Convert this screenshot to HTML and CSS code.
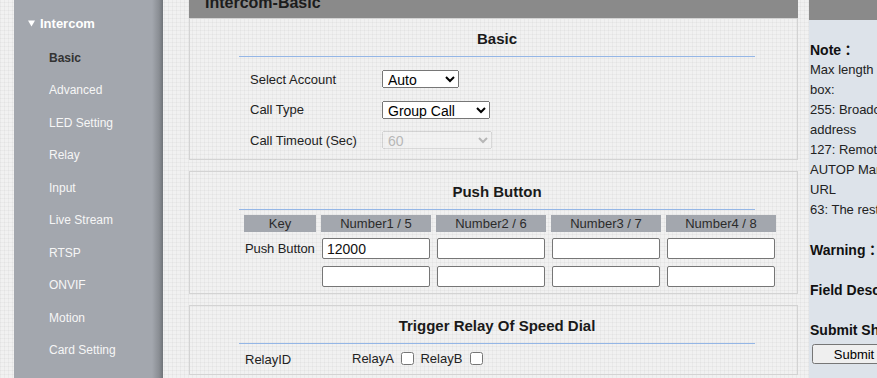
FILE: index.html
```html
<!DOCTYPE html>
<html lang="en">
<head>
<meta charset="utf-8">
<title>Intercom-Basic</title>
<link rel="stylesheet" href="styles.css">
</head>
<body>
<div class="page">
  <nav class="sidebar">
    <div class="group">
      <svg class="caret" width="8" height="7" viewBox="0 0 8 7"><polygon points="0,0 8,0 4,7" fill="#ffffff"/></svg>
      <span>Intercom</span>
    </div>
    <ul class="menu">
      <li class="active">Basic</li>
      <li>Advanced</li>
      <li>LED Setting</li>
      <li>Relay</li>
      <li>Input</li>
      <li>Live Stream</li>
      <li>RTSP</li>
      <li>ONVIF</li>
      <li>Motion</li>
      <li>Card Setting</li>
    </ul>
  </nav>

  <main class="main">
    <h1 class="page-title">Intercom-Basic</h1>

    <section class="box">
      <div class="box-head"><h2>Basic</h2></div>
      <div class="form">
        <label class="form-label">Select Account</label>
        <select class="sel sel-account"><option>Auto</option></select>
        <label class="form-label">Call Type</label>
        <select class="sel sel-type"><option>Group Call</option></select>
        <label class="form-label">Call Timeout (Sec)</label>
        <select class="sel sel-timeout" disabled><option>60</option></select>
      </div>
    </section>

    <section class="box">
      <div class="box-head"><h2>Push Button</h2></div>
      <table class="keys">
        <tr>
          <th class="col-key">Key</th>
          <th class="col-num">Number1 / 5</th>
          <th class="col-num">Number2 / 6</th>
          <th class="col-num">Number3 / 7</th>
          <th class="col-num">Number4 / 8</th>
        </tr>
        <tr>
          <td class="key-label">Push Button</td>
          <td><input class="txt" type="text" value="12000"></td>
          <td><input class="txt" type="text"></td>
          <td><input class="txt" type="text"></td>
          <td><input class="txt" type="text"></td>
        </tr>
        <tr>
          <td class="key-label"></td>
          <td><input class="txt" type="text"></td>
          <td><input class="txt" type="text"></td>
          <td><input class="txt" type="text"></td>
          <td><input class="txt" type="text"></td>
        </tr>
      </table>
    </section>

    <section class="box box-last">
      <div class="box-head"><h2>Trigger Relay Of Speed Dial</h2></div>
      <div class="relay-row">
        <span class="relay-label">RelayID</span>
        <span class="relay-opts">RelayA <input type="checkbox"> RelayB <input type="checkbox"></span>
      </div>
    </section>
  </main>

  <aside class="note">
    <div class="note-head"></div>
    <div class="note-body">
      <div class="note-block">
        <h3>Note：</h3>
        <p>Max length of the input<br>box:<br>255: Broadcast<br>address<br>127: Remote<br>AUTOP Manual<br>URL<br>63: The rest</p>
      </div>
      <div class="note-block"><h3>Warning：</h3></div>
      <div class="note-block"><h3>Field Description</h3></div>
      <div class="note-block">
        <h3>Submit Shortcut</h3>
        <button class="submit" type="button">Submit</button>
      </div>
    </div>
  </aside>
</div>
</body>
</html>
```

FILE: styles.css
```css
html, body {
  margin: 0;
  padding: 0;
  overflow: hidden;
}

body {
  font-family: "Liberation Sans", Arial, "Noto Sans CJK JP", sans-serif;
  color: #222;
  background-color: #f1f1f1;
  background-image:
    repeating-linear-gradient(0deg, rgba(0,0,0,0.03) 0 1px, transparent 1px 4px),
    repeating-linear-gradient(90deg, rgba(0,0,0,0.03) 0 1px, transparent 1px 4px);
}

.page {
  display: flex;
  align-items: flex-start;
  margin-top: -13px;
  padding-left: 14px;
  height: 420px;
}

/* Sidebar */
.sidebar {
  flex: none;
  width: 149px;
  height: 420px;
  background: linear-gradient(to right, #a3a7ae 0, #a3a7ae 138px, #8a8e94 145px, #6f7378 149px);
}

.group {
  display: flex;
  align-items: center;
  gap: 5px;
  height: 32px;
  margin-top: 20px;
  padding-left: 14px;
  color: #fff;
  font-weight: bold;
  font-size: 13px;
}

.caret {
  display: block;
  width: 7px;
  height: 7px;
}

.menu {
  list-style: none;
  margin: 2.75px 0 0;
  padding: 0 0 0 35px;
}

.menu li {
  height: 32.5px;
  line-height: 32.5px;
  font-size: 12px;
  color: #f6f6f6;
}

.menu li.active {
  color: #333;
  font-weight: bold;
}

/* Main */
.main {
  flex: none;
  width: 609px;
  margin-left: 26px;
}

.page-title {
  margin: 0;
  height: 31px;
  line-height: 31px;
  padding-left: 16px;
  background: #8a8a8a;
  color: #1c1c1c;
  font-size: 16px;
  font-weight: bold;
}

.box {
  border: 1px solid #d3d3d3;
  margin-bottom: 11px;
}

.box-head {
  width: 516px;
  margin-left: 49px;
  padding: 11px 0 8px;
  border-bottom: 1px solid #94b6e6;
}

.box-head h2 {
  margin: 0;
  font-size: 15px;
  line-height: 18px;
  font-weight: bold;
  text-align: center;
  color: #1a1a1a;
}

/* Basic form */
.form {
  display: grid;
  grid-template-columns: 132px auto;
  grid-auto-rows: 18px;
  row-gap: 12.5px;
  align-items: center;
  justify-items: start;
  padding: 13px 0 10px 60px;
}

.form-label {
  font-size: 13px;
  color: #222;
}

.sel {
  height: 18px;
  font-family: "Liberation Sans", Arial, sans-serif;
  font-size: 14px;
  padding: 0 0 0 1px;
  color: #000;
}

.sel:disabled {
  color: #a0a0a0;
}

.sel-account { width: 77px; }
.sel-type { width: 108px; }
.sel-timeout { width: 110px; }

/* Push button table */
.keys {
  border-collapse: separate;
  border-spacing: 5px;
  margin-left: 49px;
  table-layout: fixed;
}

.keys th {
  height: 17px;
  padding: 0;
  background: #a3a7ae;
  color: #2b2b2b;
  font-size: 13px;
  font-weight: normal;
  text-align: center;
  white-space: nowrap;
}

.col-key { width: 72px; }
.col-num { width: 110px; }

.keys td {
  padding: 1px;
  height: 21px;
}

.keys td.key-label {
  padding: 1px 0 1px 1px;
  font-size: 13px;
  color: #222;
  text-align: left;
  white-space: nowrap;
  letter-spacing: -0.1px;
}

.txt {
  display: block;
  box-sizing: border-box;
  width: 108px;
  height: 21px;
  margin: 0;
  padding: 0 4px;
  border: 1px solid #767676;
  border-radius: 2px;
  background: #fff;
  font-family: "Liberation Sans", Arial, sans-serif;
  font-size: 14px;
  color: #111;
}

/* Relay row */
.box-last {
  padding-bottom: 5px;
}

.relay-row {
  display: flex;
  align-items: center;
  height: 20px;
  margin-top: 5px;
  padding-left: 55px;
  font-size: 13px;
}

.relay-label {
  width: 107px;
}

.relay-opts input {
  vertical-align: middle;
  margin: 0 3px 2px 4px;
}

/* Note panel */
.note {
  flex: none;
  width: 200px;
  margin-left: 11px;
}

.note-head {
  height: 33px;
  background: #8a8a8a;
}

.note-body {
  background: #dde3ea;
  padding: 20px 0 0 1px;
  height: 400px;
  font-size: 13px;
  line-height: 20px;
  white-space: nowrap;
}

.note-block {
  margin-bottom: 20px;
}

.note-block h3 {
  margin: 0;
  font-size: 14px;
  line-height: 20px;
  font-weight: bold;
  color: #111;
}

.note-block p {
  margin: 0;
  color: #222;
}

.submit {
  display: block;
  width: 84px;
  height: 20px;
  margin: 4px 0 0 2px;
  padding: 0;
  font-family: "Liberation Sans", Arial, sans-serif;
  font-size: 13px;
}
```
